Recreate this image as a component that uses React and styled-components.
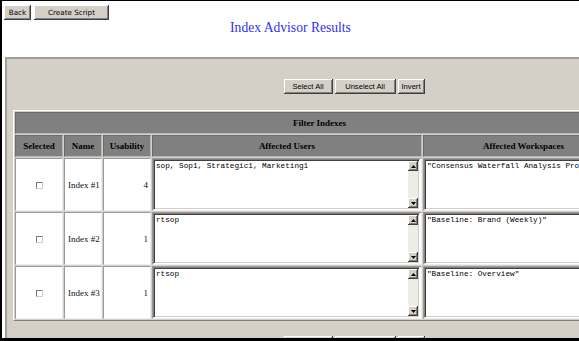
import React from "react";
import styled, { createGlobalStyle } from "styled-components";

const Global = createGlobalStyle`
  html, body { margin: 0; padding: 0; background: #fff; }
  body { width: 579px; height: 341px; overflow: hidden; }
`;

const Frame = styled.div`
  box-sizing: border-box;
  width: 579px;
  height: 341px;
  overflow: hidden;
  background: #fff;
  border-top: 1px solid #000;
  border-left: 2px solid #000;
  border-bottom: 3px solid #000;
`;

const TopBar = styled.div`
  display: flex;
  gap: 3px;
  padding: 4px 0 0 2px;
`;

const ClassicButton = styled.button`
  box-sizing: border-box;
  width: ${(p) => p.$w}px;
  height: 15px;
  margin: 0;
  padding: 0;
  border: none;
  background: #d4d0c8;
  box-shadow: inset -1px -1px #404040, inset 1px 1px #ffffff, inset -2px -2px #808080;
  color: #000;
  display: flex;
  align-items: center;
  justify-content: center;
  line-height: 1;
  font-family: ${(p) => (p.$wide ? '"DejaVu Sans", sans-serif' : '"Liberation Sans", Arial, sans-serif')};
  font-size: ${(p) => (p.$wide ? "7.2px" : "7.6px")};
  white-space: nowrap;
`;

const Title = styled.div`
  margin-top: 1px;
  text-align: center;
  font-family: "Liberation Serif", "Times New Roman", serif;
  font-size: 13.6px;
  line-height: 13px;
  color: #3030f4;
`;

const Panel = styled.div`
  box-sizing: border-box;
  width: 690px;
  min-height: 320px;
  margin: 23px 0 0 3px;
  padding: 20px 0 0 6px;
  background: #d4d0c8;
  border-top: 2px solid #a19e97;
  border-left: 2px solid #a19e97;
`;

const ButtonRow = styled.div`
  display: flex;
  justify-content: center;
  gap: 2px;
  margin-top: ${(p) => p.$top || 0}px;
`;

const Grid = styled.table`
  table-layout: fixed;
  width: 612px;
  margin-top: 16px;
  border-collapse: separate;
  border-spacing: 1px;
  border: 1px solid;
  border-color: #ffffff #808080 #808080 #ffffff;
  background: #d4d0c8;
`;

const HeadCell = styled.th`
  box-sizing: border-box;
  height: 22px;
  padding: 0;
  background: #808080;
  border: 1px solid;
  border-color: #6a6a6a #b8b8b8 #b8b8b8 #6a6a6a;
  font-family: "Liberation Serif", "Times New Roman", serif;
  font-weight: bold;
  font-size: 9px;
  color: #000;
  text-align: center;
  white-space: nowrap;
  overflow: hidden;
`;

const Cell = styled.td`
  box-sizing: border-box;
  height: 53px;
  padding: 0 ${(p) => (p.$align === "right" ? "2px" : "0")} 0 ${(p) => (p.$align === "left" ? "3px" : "0")};
  background: #fff;
  border: 1px solid;
  border-color: #9a9a9a #eeeeee #eeeeee #9a9a9a;
  font-family: "Liberation Serif", "Times New Roman", serif;
  font-size: 9px;
  color: #111;
  text-align: ${(p) => p.$align || "center"};
  vertical-align: middle;
  white-space: nowrap;
  overflow: hidden;
`;

const Checkbox = styled.span`
  display: inline-block;
  box-sizing: border-box;
  width: 7px;
  height: 7px;
  vertical-align: middle;
  background: #fff;
  border: 1px solid;
  border-color: #7a7a7a #d0d0d0 #d0d0d0 #7a7a7a;
`;

const TextBox = styled.div`
  box-sizing: border-box;
  display: flex;
  width: ${(p) => (p.$full ? "100%" : "calc(100% - 1px)")};
  height: 51px;
  background: #fff;
  border: 1px solid;
  border-color: #808080 #ffffff #ffffff #808080;
  box-shadow: inset 1px 1px #404040, inset -1px -1px #d4d0c8;
  padding: 2px 1px 1px 2px;
`;

const Area = styled.textarea`
  flex: 1;
  min-width: 0;
  margin: 0;
  padding: 0;
  border: none;
  outline: none;
  resize: none;
  overflow: hidden;
  white-space: pre;
  background: #fff;
  color: #000;
  font-family: "Liberation Mono", "Courier New", monospace;
  font-size: 7.7px;
  line-height: 9px;
`;

const ScrollBar = styled.div`
  display: flex;
  flex-direction: column;
  width: 10px;
  flex: none;
  margin-top: -1px;
`;

const ScrollArrow = styled.div`
  box-sizing: border-box;
  width: 10px;
  height: 10px;
  background: #d4d0c8;
  box-shadow: inset -1px -1px #404040, inset 1px 1px #ffffff, inset -2px -2px #808080;
  display: flex;
  align-items: center;
  justify-content: center;
`;

const Track = styled.div`
  flex: 1;
  background: #eeece7;
`;

const Arrow = ({ down }) => (
  <svg width="5" height="3" viewBox="0 0 5 3">
    <polygon points={down ? "0,0 5,0 2.5,3" : "2.5,0 5,3 0,3"} fill="#000" />
  </svg>
);

const ScrollText = ({ text, full }) => (
  <TextBox $full={full}>
    <Area readOnly value={text} />
    <ScrollBar>
      <ScrollArrow>
        <Arrow />
      </ScrollArrow>
      <Track />
      <ScrollArrow>
        <Arrow down />
      </ScrollArrow>
    </ScrollBar>
  </TextBox>
);

const rows = [
  {
    name: "Index #1",
    usability: 4,
    users: "sop, Sop1, Strategic1, Marketing1",
    workspaces: '"Consensus Waterfall Analysis Process (Weekly)", "Baseline: Overview"',
  },
  { name: "Index #2", usability: 1, users: "rtsop", workspaces: '"Baseline: Brand (Weekly)"' },
  { name: "Index #3", usability: 1, users: "rtsop", workspaces: '"Baseline: Overview"' },
];

const SelectButtons = ({ top }) => (
  <ButtonRow $top={top}>
    <ClassicButton $w={49}>Select All</ClassicButton>
    <ClassicButton $w={61}>Unselect All</ClassicButton>
    <ClassicButton $w={27}>Invert</ClassicButton>
  </ButtonRow>
);

export default function App() {
  return (
    <>
      <Global />
      <Frame>
        <TopBar>
          <ClassicButton $wide $w={27}>Back</ClassicButton>
          <ClassicButton $wide $w={75}>Create Script</ClassicButton>
        </TopBar>
        <Title>Index Advisor Results</Title>
        <Panel>
          <SelectButtons />
          <Grid>
            <colgroup>
              <col style={{ width: 48 }} />
              <col style={{ width: 38 }} />
              <col style={{ width: 48 }} />
              <col style={{ width: 270 }} />
              <col style={{ width: 201 }} />
            </colgroup>
            <thead>
              <tr>
                <HeadCell colSpan={5}>Filter Indexes</HeadCell>
              </tr>
              <tr>
                <HeadCell>Selected</HeadCell>
                <HeadCell>Name</HeadCell>
                <HeadCell>Usability</HeadCell>
                <HeadCell>Affected Users</HeadCell>
                <HeadCell>Affected Workspaces</HeadCell>
              </tr>
            </thead>
            <tbody>
              {rows.map((r) => (
                <tr key={r.name}>
                  <Cell>
                    <Checkbox />
                  </Cell>
                  <Cell $align="left">{r.name}</Cell>
                  <Cell $align="right">{r.usability}</Cell>
                  <Cell>
                    <ScrollText text={r.users} />
                  </Cell>
                  <Cell>
                    <ScrollText text={r.workspaces} full />
                  </Cell>
                </tr>
              ))}
            </tbody>
          </Grid>
          <SelectButtons top={15} />
        </Panel>
      </Frame>
    </>
  );
}
